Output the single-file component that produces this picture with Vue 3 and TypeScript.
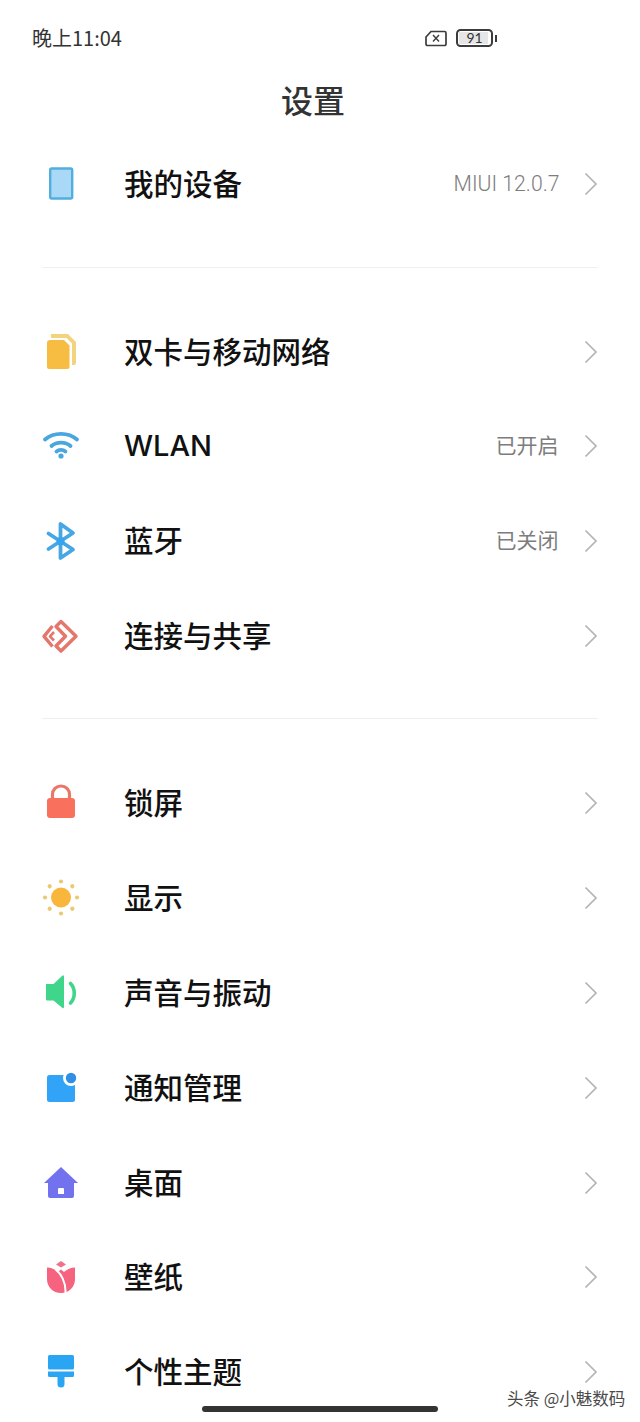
<script setup lang="ts">
interface Row {
  id: string
  label: string
  value?: string
}
const groupA: Row[] = [{ id: 'device', label: '我的设备', value: 'MIUI 12.0.7' }]
const groupB: Row[] = [
  { id: 'sim', label: '双卡与移动网络' },
  { id: 'wifi', label: 'WLAN', value: '已开启' },
  { id: 'bt', label: '蓝牙', value: '已关闭' },
  { id: 'share', label: '连接与共享' },
]
const groupC: Row[] = [
  { id: 'lock', label: '锁屏' },
  { id: 'sun', label: '显示' },
  { id: 'sound', label: '声音与振动' },
  { id: 'notify', label: '通知管理' },
  { id: 'home', label: '桌面' },
  { id: 'wall', label: '壁纸' },
  { id: 'theme', label: '个性主题' },
]
const groups = [groupA, groupB, groupC]
const rays = [0, 45, 90, 135, 180, 225, 270, 315]
</script>

<template>
  <div class="phone">
    <div class="status">
      <span class="time">晚上11:04</span>
      <div class="status-icons">
        <svg width="22" height="17" viewBox="0 0 22 17" fill="none" stroke="#3c3c3c" stroke-width="1.7">
          <path d="M6 1.500H19.500a1.500 1.500 0 0 1 1.500 1.500V14a1.500 1.500 0 0 1-1.500 1.500H2.500A1.500 1.500 0 0 1 1 14V7Z" />
          <path d="M8 5l6 6.500M14 5l-6 6.500" stroke-width="1.400" />
        </svg>
        <div class="battery">
          <div class="battery-body"><span class="battery-fill"></span><span class="battery-num">91</span></div>
          <span class="battery-cap"></span>
        </div>
      </div>
    </div>
    <h1 class="title">设置</h1>
    <section v-for="(group, gi) in groups" :key="gi" class="group">
      <div v-if="gi > 0" class="divider"></div>
      <div v-for="row in group" :key="row.id" class="row">
        <div class="icon">
          <svg width="40" height="40" viewBox="0 0 40 40">
            <template v-if="row.id === 'device'">
              <rect x="9.200" y="4.500" width="22" height="30" rx="1.500" fill="#a9d9f7" stroke="#52aede" stroke-width="2.400" />
            </template>
            <template v-else-if="row.id === 'sim'">
              <path d="M10 2H27L35 10V31a2 2 0 0 1-2 2H31V11.500L25.500 6H10Z" fill="#f3d47e" />
              <path d="M9 8H23L28.500 13.500V35a2 2 0 0 1-2 2H8a2 2 0 0 1-2-2V11a3 3 0 0 1 3-3Z" fill="#f6bd42" />
            </template>
            <template v-else-if="row.id === 'wifi'">
              <g fill="none" stroke="#4aa6df" stroke-width="3.800" stroke-linecap="round">
                <path d="M4 13.500C12.500 6 27.500 6 36 13.500" />
                <path d="M10.500 20C15.500 15.500 24.500 15.500 29.500 20" />
                <path d="M15.500 25.500C18 23.500 22 23.500 24.500 25.500" />
              </g>
              <circle cx="20" cy="30" r="2.600" fill="#4aa6df" />
            </template>
            <template v-else-if="row.id === 'bt'">
              <path d="M7.500 12.500L32 28.500L19.500 37V3L32 12L7.500 28" fill="none" stroke="#47a7e4" stroke-width="3.800" stroke-linecap="round" stroke-linejoin="round" />
              <circle cx="19.500" cy="20.300" r="4" fill="#36a4ef" />
            </template>
            <template v-else-if="row.id === 'share'">
              <g fill="none" stroke="#e4766b" stroke-width="3.400" stroke-linejoin="round">
                <path d="M20 5.500L35 20.300L20 35L15 30L24.500 20.300L15 10.500Z" />
                <path d="M11.500 10L3 20.300L11.500 30.500" />
                <path d="M13 16L9 20.300L13 24.500" stroke-width="2.600" />
              </g>
            </template>
            <template v-else-if="row.id === 'lock'">
              <path d="M11.500 17V11.500a8.500 8.500 0 0 1 17 0V17" fill="none" stroke="#e9786c" stroke-width="3.200" />
              <rect x="6" y="15" width="28" height="20" rx="3" fill="#f9705d" />
            </template>
            <template v-else-if="row.id === 'sun'">
              <circle cx="20" cy="19.500" r="10" fill="#f8b73c" />
              <g fill="#e9c972">
                <circle v-for="a in rays" :key="a" cx="20" cy="3.500" r="2.100" :transform="`rotate(${a} 20 19.500)`" />
              </g>
            </template>
            <template v-else-if="row.id === 'sound'">
              <path d="M5 11H12.500L21.500 2.500a1 1 0 0 1 1.500 1V34a1 1 0 0 1-1.500 1L12.500 27.500H6a1 1 0 0 1-1-1Z" fill="#3fd68b" />
              <path d="M29.500 10.500C34.500 15.500 34.500 25 29.500 30" fill="none" stroke="#3fd68b" stroke-width="3.600" stroke-linecap="round" />
            </template>
            <template v-else-if="row.id === 'notify'">
              <rect x="6" y="7" width="28" height="27" rx="2.500" fill="#32a4f8" />
              <circle cx="30" cy="10" r="8" fill="#fff" />
              <circle cx="30" cy="10" r="5.200" fill="#2f8fe2" />
            </template>
            <template v-else-if="row.id === 'home'">
              <path fill-rule="evenodd" d="M20 4L37 20H33V33a2 2 0 0 1-2 2H9a2 2 0 0 1-2-2V20H3ZM17 26V31H23V26a1 1 0 0 0-1-1H18a1 1 0 0 0-1 1Z" fill="#7271ee" />
            </template>
            <template v-else-if="row.id === 'wall'">
              <path d="M20 4L25 7.500L20 10.500L15 7.500Z" fill="#f1708a" />
              <path d="M6 10.500C10 10.500 14 12.500 17 15L20 12.500L23 15C26 12.500 30 10.500 34 10.500V22C34 30 28 36 20 36C12 36 6 30 6 22Z" fill="#f5637f" />
              <path d="M14.500 12.500C20 16.500 25 25 24.500 36" fill="none" stroke="#fff" stroke-width="2" />
            </template>
            <template v-else-if="row.id === 'theme'">
              <rect x="7" y="3" width="26" height="14.500" rx="1.500" fill="#2aa5f3" />
              <path d="M7 19.500H33V23.500a1.500 1.500 0 0 1-1.500 1.500H8.500A1.500 1.500 0 0 1 7 23.500Z" fill="#2aa5f3" />
              <path d="M16.500 24.500H23.500V32a3.500 3.500 0 0 1-7 0Z" fill="#2aa5f3" />
            </template>
          </svg>
        </div>
        <span class="label" :class="{ latin: row.id === 'wifi' }">{{ row.label }}</span>
        <span v-if="row.value" class="value" :class="{ latin: row.id === 'device' }">{{ row.value }}</span>
        <svg class="chevron" width="14" height="24" viewBox="0 0 14 24" fill="none" stroke="#b4b4b4" stroke-width="1.700">
          <path d="M1.500 1.500L12 12L1.500 22.500" />
        </svg>
      </div>
    </section>
    <div class="watermark">头条 @小魅数码</div>
    <div class="home-bar"></div>
  </div>
</template>

<style scoped>
.phone {
  position: relative;
  width: 640px;
  height: 1422px;
  overflow: hidden;
  background: #fff;
  font-family: "Noto Sans CJK SC", "Noto Sans", sans-serif;
  color: #111;
}
.status {
  height: 76px;
  padding: 24px 0 0 32px;
  box-sizing: border-box;
  display: flex;
  align-items: flex-start;
}
.time {
  font-size: 20px;
  line-height: 28px;
  color: #333;
  width: 393px;
}
.status-icons {
  display: flex;
  align-items: center;
  gap: 9px;
  height: 28px;
}
.battery {
  display: flex;
  align-items: center;
  gap: 2px;
}
.battery-body {
  position: relative;
  width: 37px;
  height: 18px;
  box-sizing: border-box;
  border: 2px solid #3c3c3c;
  border-radius: 4.500px;
  display: flex;
  align-items: center;
  justify-content: center;
  overflow: hidden;
}
.battery-fill {
  position: absolute;
  left: 1px;
  top: 1px;
  bottom: 1px;
  width: 29px;
  background: #e6e6e6;
}
.battery-num {
  position: relative;
  font-size: 14px;
  line-height: 14px;
  color: #333;
  font-family: "Lato", sans-serif;
}
.battery-cap {
  width: 2px;
  height: 7px;
  background: #3c3c3c;
}
.title {
  margin: 0;
  height: 61px;
  box-sizing: border-box;
  font-size: 32px;
  line-height: 46px;
  font-weight: 500;
  text-align: center;
  color: #333;
  position: relative;
  left: -7px;
}
.group {
  display: flex;
  flex-direction: column;
}
.divider {
  height: 1px;
  margin: 35px 42px 36.500px;
  background: #efefef;
}
.row {
  height: 94.800px;
  display: flex;
  align-items: center;
  padding: 0 42px 0 41px;
  flex-shrink: 0;
}
.icon {
  width: 40px;
  height: 40px;
  margin-right: 43px;
}
.label {
  flex: 1;
  font-size: 29.500px;
  line-height: 40px;
  font-weight: 500;
  color: #111;
  margin-bottom: 4px;
}
.label.latin {
  font-family: "Inter", sans-serif;
  font-size: 29px;
  margin-bottom: 0;
}
.value {
  font-size: 21px;
  line-height: 28px;
  color: #7d7d7d;
  margin-right: 25.500px;
  margin-bottom: 4px;
}
.value.latin {
  font-family: "Roboto", sans-serif;
  font-weight: 300;
  font-size: 21.200px;
  margin-right: 24.500px;
  margin-bottom: 0;
}
.chevron {
  flex-shrink: 0;
}
.watermark {
  position: absolute;
  left: 507px;
  top: 1388px;
  font-size: 16.500px;
  line-height: 20px;
  color: #4a4a4a;
  text-shadow: 0 0 2px #fff;
  white-space: nowrap;
}
.home-bar {
  position: absolute;
  left: 202px;
  top: 1406px;
  width: 236px;
  height: 6px;
  border-radius: 3px;
  background: #333;
}
</style>

<style>
html, body {
  margin: 0;
  background: #fff;
}
</style>
